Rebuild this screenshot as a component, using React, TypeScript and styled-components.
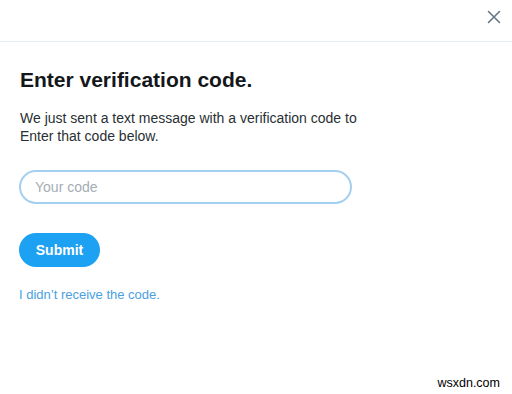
import React from "react";
import styled, { createGlobalStyle } from "styled-components";

const Global = createGlobalStyle`
  html, body { margin: 0; padding: 0; background: #ffffff; }
  body { font-family: "Liberation Sans", Arial, sans-serif; }
`;

const Page = styled.div`
  width: 512px;
  height: 394px;
  display: flex;
  flex-direction: column;
  background: #ffffff;
  position: relative;
  overflow: hidden;
`;

const Header = styled.div`
  height: 42px;
  border-bottom: 1px solid #e6ecf0;
  display: flex;
  align-items: center;
  justify-content: flex-end;
  padding-right: 8px;
  box-sizing: border-box;
`;

const CloseButton = styled.button`
  width: 20px;
  height: 20px;
  padding: 0;
  border: 0;
  background: transparent;
  display: flex;
  align-items: center;
  justify-content: center;
  margin-top: -8px;
`;

const Body = styled.div`
  display: flex;
  flex-direction: column;
  align-items: flex-start;
  padding: 25px 19px 0 19px;
`;

const Title = styled.h1`
  margin: 0 0 0 1px;
  font-size: 21px;
  line-height: 26px;
  font-weight: 700;
  color: #14171a;
`;

const Text = styled.p`
  margin: 16px 0 0 1px;
  font-size: 14px;
  line-height: 18px;
  color: #292f33;
`;

const Input = styled.input`
  margin-top: 25px;
  width: 333px;
  height: 34px;
  box-sizing: border-box;
  border: 2px solid #a4d0f0;
  border-radius: 17px;
  padding: 0 14px;
  font-family: "Liberation Sans", Arial, sans-serif;
  font-size: 14px;
  color: #14171a;
  outline: none;
  &::placeholder { color: #a5adb5; }
`;

const Submit = styled.button`
  margin-top: 29px;
  width: 81px;
  height: 34px;
  border: 0;
  border-radius: 17px;
  background: #1da1f2;
  color: #ffffff;
  font-family: "Liberation Sans", Arial, sans-serif;
  font-size: 14px;
  font-weight: 700;
  padding: 0;
`;

const Link = styled.a`
  margin-top: 20px;
  font-size: 13px;
  line-height: 16px;
  color: #4a9fdf;
  text-decoration: none;
`;

const Watermark = styled.div`
  position: absolute;
  right: 12px;
  bottom: 4px;
  font-size: 12.5px;
  color: #000000;
`;

export default function App() {
  return (
    <Page>
      <Global />
      <Header>
        <CloseButton aria-label="Close">
          <svg width="14" height="14" viewBox="0 0 14 14">
            <path d="M1.5 1.5 L12.5 12.5 M12.5 1.5 L1.5 12.5" stroke="#657786" strokeWidth="1.6" strokeLinecap="round" />
          </svg>
        </CloseButton>
      </Header>
      <Body>
        <Title>Enter verification code.</Title>
        <Text>
          We just sent a text message with a verification code to
          <br />
          Enter that code below.
        </Text>
        <Input placeholder="Your code" />
        <Submit>Submit</Submit>
        <Link href="#">I didn’t receive the code.</Link>
      </Body>
      <Watermark>wsxdn.com</Watermark>
    </Page>
  );
}
